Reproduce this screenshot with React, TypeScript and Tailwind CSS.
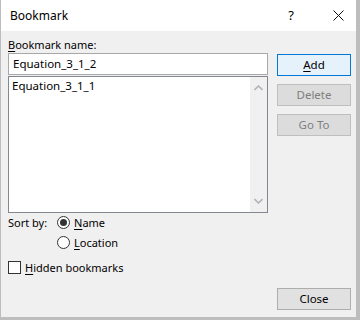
import React from 'react';

const font = "font-['Noto_Sans',sans-serif]";

const Chevron = ({ down }: { down?: boolean }) => (
  <svg width="9" height="6" viewBox="0 0 9 6" className="block">
    <path
      d={down ? 'M0.5 1 L4.5 5 L8.5 1' : 'M0.5 5 L4.5 1 L8.5 5'}
      fill="none"
      stroke="#b4b4b4"
      strokeWidth="1.6"
    />
  </svg>
);

const Button = ({
  children,
  variant = 'normal',
  className = '',
}: {
  children: React.ReactNode;
  variant?: 'default' | 'normal' | 'disabled';
  className?: string;
}) => {
  const styles = {
    default: 'bg-[#e5f1fb] border-[#0078d7] text-black',
    normal: 'bg-[#e1e1e1] border-[#adadad] text-black',
    disabled: 'bg-[#dcdcdc] border-[#bfbfbf] text-[#7f7f7f]',
  }[variant];
  return (
    <div
      className={`w-[74px] h-[22px] border flex items-center justify-center text-[11.5px] leading-none ${styles} ${className}`}
    >
      {children}
    </div>
  );
};

const Radio = ({ checked, children }: { checked?: boolean; children: React.ReactNode }) => (
  <div className="flex items-center h-[15px]">
    <div className="w-[13px] h-[13px] rounded-full border border-[#333333] bg-white flex items-center justify-center">
      {checked && <div className="w-[7px] h-[7px] rounded-full bg-[#333333]" />}
    </div>
    <span className="ml-[4px] leading-none">{children}</span>
  </div>
);

export default function App() {
  return (
    <div
      className={`${font} w-[360px] h-[320px] bg-[#f0f0f0] border-l border-r-4 border-b-[3px] border-[#bdbdbd] flex flex-col text-[11px] text-black`}
    >
      {/* Title bar */}
      <div className="h-[31px] bg-white flex items-center shrink-0">
        <span className="ml-[9px] text-[12px]">Bookmark</span>
        <span className="ml-auto mr-[39px] text-[13px]">?</span>
        <svg width="11" height="11" viewBox="0 0 11 11" className="mr-[12px]">
          <path d="M0.5 0.5 L10.5 10.5 M10.5 0.5 L0.5 10.5" stroke="#111" strokeWidth="1" />
        </svg>
      </div>

      <div className="flex-1 flex flex-col pl-[7px] pr-[5px]">
        <div className="flex gap-[9px]">
          {/* Left column */}
          <div className="w-[260px] flex flex-col">
            <div className="mt-[6px] h-[16px] flex items-center">
              <span>
                <span className="underline underline-offset-2">B</span>ookmark name:
              </span>
            </div>
            <div className="h-[22px] bg-white border border-[#a8a8a8] flex items-center px-[4px] text-[11.5px]">
              Equation_3_1_2
            </div>
            <div className="h-[137px] mt-px bg-white border border-[#828790] flex">
              <div className="flex-1 px-[3px] pt-[1px] text-[11.5px]">
                <div className="leading-[15px]">Equation_3_1_1</div>
              </div>
              <div className="w-[17px] bg-[#f0f0f0] flex flex-col items-center justify-between py-[8px]">
                <Chevron />
                <Chevron down />
              </div>
            </div>
            <div className="mt-[2px] flex">
              <span className="w-[49px] leading-[15px]">Sort by:</span>
              <div className="flex flex-col gap-[5px]">
                <Radio checked>
                  <span className="underline underline-offset-2">N</span>ame
                </Radio>
                <Radio>
                  <span className="underline underline-offset-2">L</span>ocation
                </Radio>
              </div>
            </div>
            <div className="mt-[11px] flex items-center">
              <div className="w-[13px] h-[13px] border border-[#333333] bg-white" />
              <span className="ml-[4px] leading-none">
                <span className="underline underline-offset-2">H</span>idden bookmarks
              </span>
            </div>
          </div>

          {/* Right column */}
          <div className="w-[74px] flex flex-col gap-[8px] pt-[23px]">
            <Button variant="default">
              <span>
                <span className="underline underline-offset-2">A</span>dd
              </span>
            </Button>
            <Button variant="disabled">Delete</Button>
            <Button variant="disabled">Go To</Button>
          </div>
        </div>

        <div className="mt-auto mb-[7px] flex justify-end">
          <Button>Close</Button>
        </div>
      </div>
    </div>
  );
}
